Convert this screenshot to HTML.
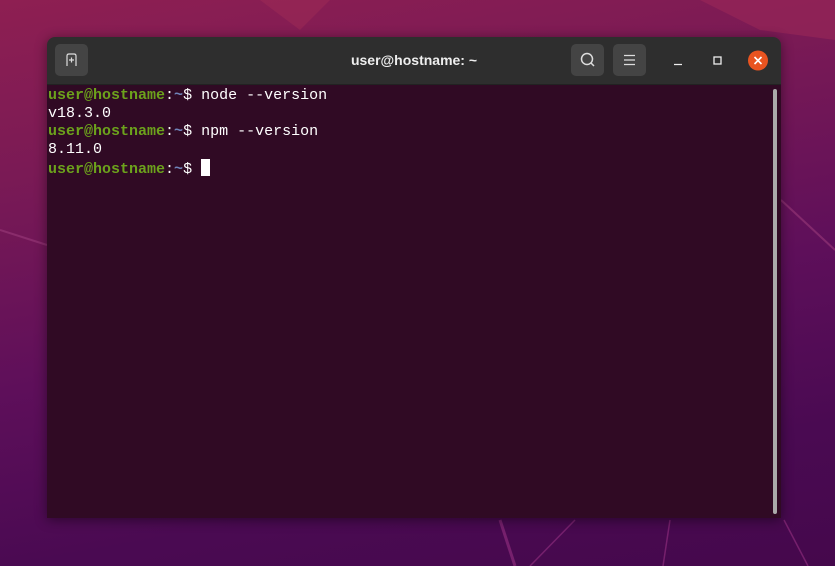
<!DOCTYPE html>
<html><head><style>
html,body{margin:0;padding:0;width:835px;height:566px;overflow:hidden}
body{position:relative;background:linear-gradient(170deg,#8e1f52 0%,#7a1a55 25%,#5e0f5a 55%,#4a0a52 80%,#45084c 100%);font-family:"Liberation Sans",sans-serif}
.shape{position:absolute}
.win{position:absolute;left:47px;top:37px;width:734px;height:481px;border-radius:8px 8px 0 0;overflow:hidden;box-shadow:0 2px 12px rgba(0,0,0,.45)}
.tb{position:absolute;left:0;top:0;width:734px;height:47px;background:#2e2e2e;border-bottom:1px solid #222}
.btn{position:absolute;top:7px;width:33px;height:32px;background:#444;border-radius:5px}
.title{position:absolute;left:0;width:734px;top:15px;text-align:center;color:#eee;font-weight:bold;font-size:14px}
.term{position:absolute;left:0;top:48px;width:734px;height:433px;background:#300a24;font-family:"Liberation Mono",monospace;font-size:15px;line-height:18px;color:#fff;padding-top:2px;padding-left:1px;white-space:pre}
.g{color:#6ca21c;font-weight:bold}.b{color:#6f83b8;font-weight:bold}
.cur{display:inline-block;width:9px;height:17px;background:#fff;vertical-align:-3px}
.sb{position:absolute;left:726px;top:52px;width:4px;height:425px;background:#aaa;border-radius:2px}
</style></head><body>
<svg class="shape" width="835" height="566" style="left:0;top:0">
<polygon points="260,0 330,0 300,30" fill="#9b2a55" opacity=".6"/>
<polygon points="700,0 835,0 835,40 760,30" fill="#a02a58" opacity=".5"/>
<line x1="0" y1="230" x2="47" y2="245" stroke="#9a3a7a" stroke-width="2" opacity=".6"/>
<line x1="781" y1="200" x2="835" y2="250" stroke="#9a3a7a" stroke-width="2" opacity=".6"/>
<line x1="500" y1="520" x2="515" y2="566" stroke="#8a2a7a" stroke-width="3" opacity=".7"/>
<line x1="530" y1="566" x2="575" y2="520" stroke="#8a2a7a" stroke-width="1.5" opacity=".7"/>
<line x1="670" y1="520" x2="663" y2="566" stroke="#8a2a7a" stroke-width="1.5" opacity=".7"/>
<line x1="784" y1="520" x2="808" y2="566" stroke="#8a2a7a" stroke-width="1.5" opacity=".7"/>
</svg>
<div class="win">
 <div class="tb">
  <div class="btn" style="left:8px"><svg width="33" height="32"><path d="M12 22 L12 12 Q12 10 14 10 L19 10 Q21 10 21 12 L21 22 M14 16 L19 16 M16.5 13.5 L16.5 18.5" stroke="#ddd" stroke-width="1.2" fill="none"/></svg></div>
  <div class="title">user@hostname: ~</div>
  <div class="btn" style="left:524px"><svg width="33" height="32"><circle cx="16" cy="15" r="5.5" stroke="#ddd" stroke-width="1.5" fill="none"/><line x1="20" y1="19" x2="23" y2="22" stroke="#ddd" stroke-width="1.5"/></svg></div>
  <div class="btn" style="left:566px"><svg width="33" height="32"><path d="M11 11.5H22M11 16H22M11 20.5H22" stroke="#ddd" stroke-width="1.2"/></svg></div>
  <svg style="position:absolute;left:620px;top:10px" width="110" height="27">
   <line x1="7" y1="17.5" x2="15" y2="17.5" stroke="#eee" stroke-width="1.3"/>
   <rect x="47" y="10" width="7" height="7" stroke="#eee" stroke-width="1.3" fill="none"/>
   <circle cx="91" cy="13.5" r="10" fill="#e95420"/>
   <path d="M87.5 10L94.5 17M94.5 10L87.5 17" stroke="#fff" stroke-width="1.6"/>
  </svg>
 </div>
 <div class="term"><span class="g">user@hostname</span>:<span class="b">~</span>$ node --version
v18.3.0
<span class="g">user@hostname</span>:<span class="b">~</span>$ npm --version
8.11.0
<span class="g">user@hostname</span>:<span class="b">~</span>$ <span class="cur"></span></div>
 <div class="sb"></div>
</div>
</body></html>
